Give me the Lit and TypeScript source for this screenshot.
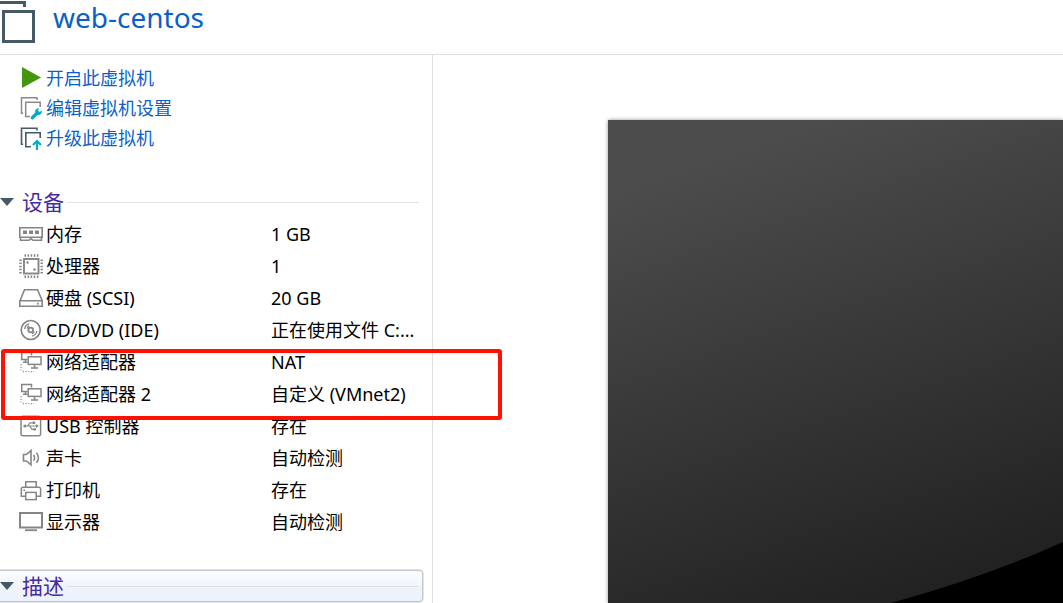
import { LitElement, html, svg, css, nothing } from "lit";
import { customElement, property, state } from "lit/decorators.js";

const ICONS: Record<string, unknown> = {
  play: svg`<path d="M3 1V22L22 11.5Z" fill="#44950f"/>`,
  edit: svg`
    <path d="M4 17.2H2.5V1.8H18V4" fill="none" stroke="#8a8a8a" stroke-width="1.5"/>
    <path d="M11 20.5H6.7V6.2H21.2V11" fill="none" stroke="#8a8a8a" stroke-width="1.5"/>
    <path d="M12.2 20.4L16.2 16.6C15.6 14 17.4 11.9 20.4 12.2L18.9 14.3L20.6 16L22.9 14.6C23.2 17.6 21.2 19.4 18.6 18.9L14.6 22.9C12.8 24.4 10.6 22.2 12.2 20.4Z" fill="#00afd0"/>`,
  upgrade: svg`
    <path d="M4 18.2H2.5V2.3H18V4.6" fill="none" stroke="#455a66" stroke-width="1.6"/>
    <path d="M12 20.7H6.8V6.7H21.2V12" fill="none" stroke="#455a66" stroke-width="1.6"/>
    <path d="M18 24V15.4M14 19L18 15L22 19" fill="none" stroke="#00afd0" stroke-width="2.2"/>`,
  memory: svg`
    <path d="M.8 5.8H23.2V15.2H.8ZM1.5 15.2V18.3H10L12 16.6L14 18.3H22.5V15.2" fill="none" stroke="#858585" stroke-width="1.6"/>
    <path d="M4 8.5H8V12H4ZM10 8.5H14V12H10ZM16 8.5H20V12H16Z" fill="#858585"/>`,
  cpu: svg`
    <rect x="5" y="5" width="14.5" height="14.5" fill="none" stroke="#858585" stroke-width="1.9"/>
    <path d="M5.5 1.5H20M5.5 22.7H20" stroke="#858585" stroke-width="2.4" stroke-dasharray="1.5 1.6"/>
    <path d="M1.5 5.5V20M22.7 5.5V20" stroke="#858585" stroke-width="2.4" stroke-dasharray="1.5 1.6"/>
    <circle cx="8.5" cy="8.5" r="1.2" fill="#858585"/><circle cx="15.5" cy="15.5" r="1.2" fill="#858585"/>`,
  disk: svg`
    <path d="M1 14.7L5.5 3.7H18.5L23.2 14.7V20.3H.8V14.7H23.2" fill="none" stroke="#858585" stroke-width="1.6"/>
    <rect x="18" y="16.8" width="1.8" height="1.8" fill="#858585"/>`,
  disc: svg`
    <circle cx="11.7" cy="12" r="9.5" fill="none" stroke="#858585" stroke-width="1.7"/>
    <circle cx="11.7" cy="12" r="2.4" fill="none" stroke="#858585" stroke-width="1.7"/>
    <path d="M5.6 11A6.4 6.4 0 0 1 10.2 5.9M8.2 10.4A4.2 4.2 0 0 1 10.2 8.2M17.8 13A6.4 6.4 0 0 1 13.2 18.1M15.2 13.6A4.2 4.2 0 0 1 13.2 15.8" fill="none" stroke="#858585" stroke-width="1.3"/>`,
  network: svg`
    <path d="M8.5 9.5H2.7V2.5H12.5V5.5M6.5 9.5V12.2M4 12.2H8.5" fill="none" stroke="#858585" stroke-width="1.5"/>
    <rect x="9.2" y="6.8" width="12.8" height="7.6" fill="none" stroke="#858585" stroke-width="1.5"/>
    <path d="M15.6 14.4V18M12 18H19" fill="none" stroke="#858585" stroke-width="1.5"/>
    <path d="M2 14V22M3.8 21.6H15" fill="none" stroke="#8f8f8f" stroke-width="1.2" stroke-dasharray="1.2 1.5"/>`,
  usb: svg`
    <rect x="2" y="2.3" width="19.6" height="19.4" rx="2" fill="none" stroke="#858585" stroke-width="1.5"/>
    <path d="M6 12H18M8.5 12L11 8.8H14M10.5 12L13 15.4H15" fill="none" stroke="#858585" stroke-width="1.2"/>
    <path d="M17 10L20 12L17 14ZM13.8 7.6H16.2V10H13.8ZM14.5 14.2H17V16.6H14.5Z" fill="#858585"/><circle cx="5.8" cy="12" r="1.5" fill="#858585"/>`,
  sound: svg`
    <path d="M4.5 8.5H7.4L12 4.6V18.8L7.4 15H4.5Z" fill="none" stroke="#858585" stroke-width="1.6"/>
    <path d="M14.7 8.8Q16.4 11.7 14.7 14.6M17.4 6.6Q21.4 11.7 17.4 16.8" fill="none" stroke="#858585" stroke-width="1.5"/>`,
  printer: svg`
    <path d="M6.7 9V3.8H17.2V9M6.3 18.2H2.3V11Q2.3 9.2 4 9.2H20Q21.6 9.2 21.6 11V18.2H17.6" fill="none" stroke="#858585" stroke-width="1.5"/>
    <rect x="6.7" y="14.4" width="10.5" height="7.2" fill="none" stroke="#858585" stroke-width="1.5"/>
    <rect x="4.4" y="11.4" width="1.6" height="1.6" fill="#858585"/>`,
  display: svg`
    <rect x="1" y="3" width="22" height="14.5" fill="none" stroke="#858585" stroke-width="2"/>
    <path d="M6 20.2H18" stroke="#858585" stroke-width="1.8"/>`,
};

@customElement("vm-icon")
class VmIcon extends LitElement {
  @property() name = "";

  static styles = css`
    :host { display: block; flex: none; width: 24px; height: 24px; }
    .glyph { display: block; }
  `;

  render() {
    return html`<svg class="glyph" width="24" height="24" viewBox="0 0 24 24" aria-hidden="true">${ICONS[this.name]}</svg>`;
  }
}

@customElement("section-heading")
class SectionHeading extends LitElement {
  @property() label = "";
  @property({ type: Boolean }) open = true;

  static styles = css`
    :host { display: block; }
    .toggle {
      display: flex; align-items: center; width: 100%; height: 30px;
      margin: 0; padding: 0; border: 0; background: none;
      font: inherit; font-size: 21px; line-height: 30px; color: #4429a3;
      text-align: left; cursor: pointer;
    }
    .arrow { flex: none; width: 14px; height: 8px; margin-right: 8px; }
    .closed { transform: rotate(-90deg); }
    .rule { flex: 1; height: 1px; margin-left: 3px; background: #dfe1e5; }
  `;

  render() {
    return html`
      <button class="toggle" aria-expanded=${this.open ? "true" : "false"}>
        <svg class="arrow ${this.open ? "" : "closed"}" viewBox="0 0 14 8" aria-hidden="true"><path d="M0 0H14L7 8Z" fill="#455a66"/></svg>
        <span>${this.label}</span>
        <span class="rule"></span>
      </button>`;
  }
}

@customElement("app-root")
class AppRoot extends LitElement {
  @state() devicesOpen = true;
  @state() descriptionOpen = true;

  private actions = [
    { icon: "play", label: "开启此虚拟机" },
    { icon: "edit", label: "编辑虚拟机设置" },
    { icon: "upgrade", label: "升级此虚拟机" },
  ];

  private devices = [
    { icon: "memory", name: "内存", value: "1 GB" },
    { icon: "cpu", name: "处理器", value: "1" },
    { icon: "disk", name: "硬盘 (SCSI)", value: "20 GB" },
    { icon: "disc", name: "CD/DVD (IDE)", value: "正在使用文件 C:..." },
    { icon: "network", name: "网络适配器", value: "NAT" },
    { icon: "network", name: "网络适配器 2", value: "自定义 (VMnet2)" },
    { icon: "usb", name: "USB 控制器", value: "存在" },
    { icon: "sound", name: "声卡", value: "自动检测" },
    { icon: "printer", name: "打印机", value: "存在" },
    { icon: "display", name: "显示器", value: "自动检测" },
  ];

  static styles = css`
    :host {
      display: grid; grid-template-rows: auto 1fr; min-height: 100vh;
      background: #fff; color: #000;
      font-family: "Noto Sans", "Noto Sans CJK SC", sans-serif;
      font-size: 18px; line-height: 30px;
    }
    .header { display: flex; gap: 17px; height: 54px; border-bottom: 1px solid #e0e0e0; }
    .logo { flex: none; width: 36px; height: 44px; }
    .title { margin: 0; font-size: 28px; line-height: 34px; font-weight: 400; color: #0a5fc8; }
    .body { display: flex; min-width: 0; }
    .sidebar { flex: none; width: 432px; padding-top: 8px; box-sizing: border-box; }
    .actions { list-style: none; margin: 0 0 34px; padding: 0 0 0 19px; }
    .action { display: inline-flex; align-items: center; gap: 3px; height: 30px; color: #0a5fc8; text-decoration: none; vertical-align: top; }
    .action-item { height: 30px; }
    .devices-heading { margin-right: 13px; }
    .devices { position: relative; margin: 1px 0 32px; }
    .table { width: 100%; border-collapse: collapse; table-layout: fixed; }
    .name { width: 252px; height: 32px; padding: 0 0 0 19px; font-weight: 400; text-align: left; }
    .name-inner { display: flex; align-items: center; gap: 3px; }
    .value { padding: 0; white-space: nowrap; }
    .highlight {
      position: absolute; left: 1px; top: 131px; width: 501px; height: 71px;
      box-sizing: border-box; border: 4px solid #fe1100; border-radius: 3px; pointer-events: none;
    }
    .description {
      margin-right: 9px; padding: 0 4px 0 0; border: 1px solid #c6c6c6; border-left: 0;
      border-radius: 0 4px 4px 0; background: linear-gradient(#fafdff, #f0f3fc 55%, #e9f2fb);
      box-shadow: 0 0 0 1px #e4e4e4;
    }
    .preview { display: flex; flex: 1; min-width: 0; padding: 65px 0 0 175px; border-left: 1px solid #e0e0e0; overflow: hidden; }
    .screen {
      display: flex; flex: 1; min-width: 0;
      background: linear-gradient(161deg, #4c4c4c 12%, #222 90%);
      box-shadow: 0 0 4px #8d9299;
    }
    .curve { flex: 1; width: 100%; min-width: 0; }
  `;

  render() {
    return html`
      <header class="header">
        <svg class="logo" viewBox="0 0 36 44" aria-hidden="true">
          <path d="M0 2.5H24.5V7M3.5 11.5H33.5V41.5H3.5Z" fill="none" stroke="#455a66" stroke-width="3"/>
        </svg>
        <h1 class="title">web-centos</h1>
      </header>
      <div class="body">
        <aside class="sidebar">
          <ul class="actions">
            ${this.actions.map((a) => html`
              <li class="action-item"><a class="action" href="#"><vm-icon name=${a.icon}></vm-icon><span>${a.label}</span></a></li>`)}
          </ul>
          <section-heading class="devices-heading" label="设备" ?open=${this.devicesOpen}
            @click=${() => (this.devicesOpen = !this.devicesOpen)}></section-heading>
          ${this.devicesOpen ? html`
            <div class="devices">
              <table class="table">
                <tbody>
                  ${this.devices.map((d) => html`
                    <tr>
                      <th class="name" scope="row"><span class="name-inner"><vm-icon name=${d.icon}></vm-icon><span>${d.name}</span></span></th>
                      <td class="value">${d.value}</td>
                    </tr>`)}
                </tbody>
              </table>
              <div class="highlight"></div>
            </div>` : nothing}
          <div class="description">
            <section-heading label="描述" ?open=${this.descriptionOpen}
              @click=${() => (this.descriptionOpen = !this.descriptionOpen)}></section-heading>
          </div>
        </aside>
        <main class="preview">
          <div class="screen">
            <svg class="curve" viewBox="0 0 455 483" preserveAspectRatio="xMaxYMax slice" role="img" aria-label="web-centos">
              <path d="M283 483Q378 457 455 422V483Z" fill="#000"/>
            </svg>
          </div>
        </main>
      </div>`;
  }
}
